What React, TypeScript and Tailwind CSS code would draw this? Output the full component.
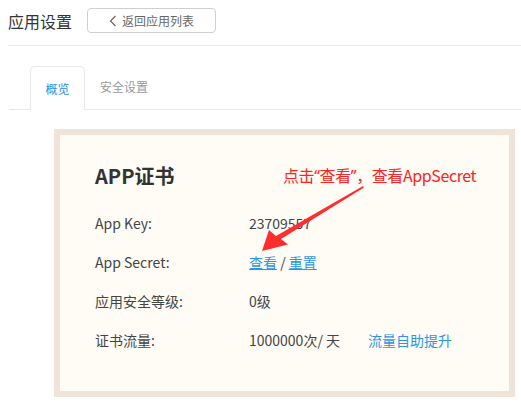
import React from "react";

const font = { fontFamily: '"Noto Sans CJK SC", "Noto Sans", sans-serif' };
const latin = { fontFamily: '"Noto Sans", sans-serif' };

export default function App() {
  return (
    <div className="relative w-[521px] h-[404px] bg-white overflow-hidden text-[#333]" style={font}>
      {/* header */}
      <div className="ml-[8px] h-[46px] border-b border-[#e8e8e8] flex items-start pt-[8px]">
        <div className="text-[16px] leading-[24px] text-[#333] mt-[1px]">应用设置</div>
        <button className="ml-[15px] h-[25px] w-[129px] border border-[#cfcfcf] rounded-[4px] flex items-center justify-center text-[12px] text-[#666] bg-white">
          <svg width="8" height="12" viewBox="0 0 8 12" className="mr-[5px]">
            <path d="M6.5 1 L1.5 6 L6.5 11" fill="none" stroke="#666" strokeWidth="1.2" />
          </svg>
          <span className="leading-[16px]">返回应用列表</span>
        </button>
      </div>
      {/* tabs */}
      <div className="ml-[9px] mt-[20px] h-[44px] border-b border-[#e8e8e8] flex items-end">
        <div className="ml-[21px] w-[55px] h-[44px] -mb-px border border-b-0 border-[#e8e8e8] rounded-t-[5px] bg-white flex items-center justify-center text-[12px] text-[#2d8fe0]">
          概览
        </div>
        <div className="ml-[15px] h-[44px] flex items-center text-[12px] text-[#999]">安全设置</div>
      </div>
      {/* card */}
      <div className="ml-[54px] mt-[19px] w-[461px] h-[268px] border-[6px] border-[#f0e4da] bg-[#fffcf6] pl-[35px] pt-[27px]">
        <div className="text-[20px] leading-[28px] font-bold text-[#333]">APP证书</div>
        <div className="mt-[14px] flex flex-col text-[14px]">
          <div className="h-[39px] flex items-center">
            <div className="w-[154px] text-[#444]">App Key:</div>
            <div className="text-[#444]">23709557</div>
          </div>
          <div className="h-[39px] flex items-center">
            <div className="w-[154px] text-[#444]">App Secret:</div>
            <div className="text-[#444]">
              <a className="text-[#2b95e4] underline">查看</a> / <a className="text-[#2b95e4] underline">重置</a>
            </div>
          </div>
          <div className="h-[39px] flex items-center">
            <div className="w-[154px] text-[#444]">应用安全等级:</div>
            <div className="text-[#444]">0级</div>
          </div>
          <div className="h-[39px] flex items-center">
            <div className="w-[154px] text-[#444]">证书流量:</div>
            <div className="text-[#444]">1000000次/ 天</div>
            <a className="ml-[28px] text-[#2b95e4]">流量自助提升</a>
          </div>
        </div>
      </div>
      {/* annotation */}
      <div className="absolute left-[283px] top-[163px] text-[16px] leading-[24px] tracking-[-0.4px] text-[#ff2222] whitespace-nowrap">
        点击<span style={latin}>“</span>查看<span style={latin}>”</span>，查看AppSecret
      </div>
      <svg className="absolute left-0 top-0" width="521" height="404" viewBox="0 0 521 404">
        <path d="M363 186 L364 187.5 L281 239 L288 244.5 L262 251 L269 230 L276 236 Z" fill="#ff2e2e" />
      </svg>
    </div>
  );
}
